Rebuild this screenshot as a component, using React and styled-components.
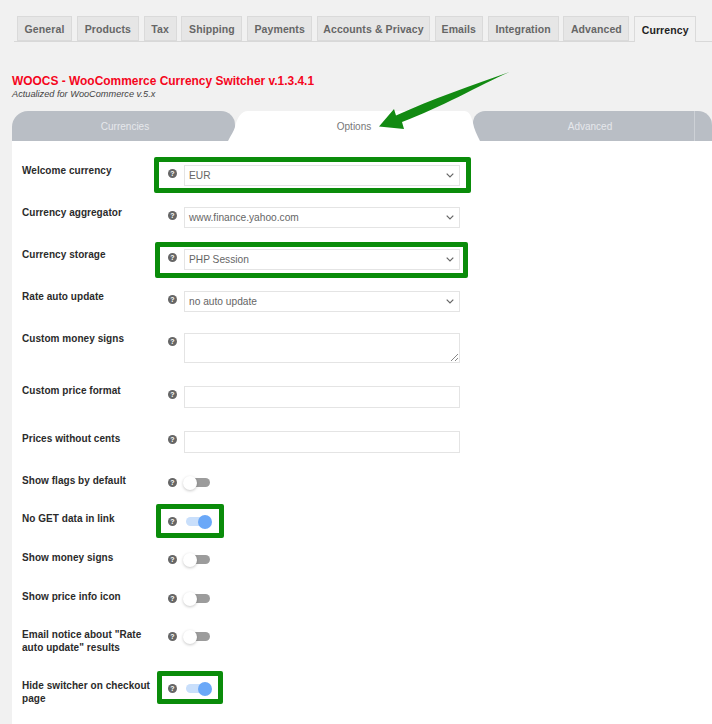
import React from "react";
import styled, { createGlobalStyle } from "styled-components";

const NAV_TABS = [
  { label: "General", width: 55 },
  { label: "Products", width: 62 },
  { label: "Tax", width: 33 },
  { label: "Shipping", width: 61 },
  { label: "Payments", width: 65 },
  { label: "Accounts & Privacy", width: 113 },
  { label: "Emails", width: 48 },
  { label: "Integration", width: 71 },
  { label: "Advanced", width: 66 },
  { label: "Currency", width: 62, active: true },
];

const App = () => (
  <>
    <GlobalStyle />
    <Page>
      <NavTabs>
        {NAV_TABS.map((tab) => (
          <NavTab key={tab.label} $width={tab.width} $active={tab.active}>
            {tab.label}
          </NavTab>
        ))}
      </NavTabs>

      <Heading>WOOCS - WooCommerce Currency Switcher v.1.3.4.1</Heading>
      <Subtitle>Actualized for WooCommerce v.5.x</Subtitle>

      <Panel>
        <Arrow width="140" height="70" viewBox="0 0 140 70">
          <path
            d="M139.5 7 C110 20 70 43 32 57 L34 64 L9 61.5 L24 44 L26 50.5 C60 35 105 19 139.5 7 Z"
            fill="#128a12"
          />
        </Arrow>
        <SectionTabs>
          <GrayTab $width={223} $radius="16px 14px 0 0" $inset={3}>Currencies</GrayTab>
          <ActiveTab>Options</ActiveTab>
          <GrayTab $width={221} $radius="12px 0 0 0" $inset={13}>Advanced</GrayTab>
          <EndTab />
        </SectionTabs>

        <Form>
          <Row $height={42}>
            <Label>Welcome currency</Label>
            <Help />
            <Control>
              <Select>EUR<Chevron /></Select>
              <Highlight $top={-8} $left={-30} $right={-11} $bottom={-7} />
            </Control>
          </Row>
          <Row $height={42}>
            <Label>Currency aggregator</Label>
            <Help />
            <Control>
              <Select>www.finance.yahoo.com<Chevron /></Select>
            </Control>
          </Row>
          <Row $height={42}>
            <Label>Currency storage</Label>
            <Help />
            <Control>
              <Select>PHP Session<Chevron /></Select>
              <Highlight $top={-7} $left={-29} $right={-8} $bottom={-8} />
            </Control>
          </Row>
          <Row $height={42}>
            <Label>Rate auto update</Label>
            <Help />
            <Control>
              <Select>no auto update<Chevron /></Select>
            </Control>
          </Row>
          <Row $height={53}>
            <Label>Custom money signs</Label>
            <Help />
            <Control>
              <TextArea>
                <ResizeGrip width="9" height="9" viewBox="0 0 9 9">
                  <path d="M1 8 L8 1 M5 8 L8 5" stroke="#888" strokeWidth="1" />
                </ResizeGrip>
              </TextArea>
            </Control>
          </Row>
          <Row $height={45}>
            <Label $offset={-1}>Custom price format</Label>
            <Help />
            <Control>
              <TextInput />
            </Control>
          </Row>
          <Row $height={43}>
            <Label $offset={2}>Prices without cents</Label>
            <Help />
            <Control>
              <TextInput />
            </Control>
          </Row>
          <ToggleRow height={39} label="Show flags by default" />
          <ToggleRow
            height={38}
            label="No GET data in link"
            offset={0}
            on
            highlight={{ $top: -9, $left: -28, $right: -12, $bottom: -12 }}
          />
          <ToggleRow height={39} label="Show money signs" />
          <ToggleRow height={38} label="Show price info icon" />
          <ToggleRow
            height={52}
            label={'Email notice about "Rate auto update" results'}
          />
          <ToggleRow
            height={37}
            label="Hide switcher on checkout page"
            offset={0}
            on
            highlight={{ $top: -9, $left: -27, $right: -11, $bottom: -11 }}
          />
        </Form>
      </Panel>
    </Page>
  </>
);

const Help = () => <HelpIcon>?</HelpIcon>;

const Chevron = () => (
  <ChevronIcon width="8" height="5" viewBox="0 0 8 5">
    <path d="M0.7 0.7 L4 4 L7.3 0.7" fill="none" stroke="#666" strokeWidth="1.2" />
  </ChevronIcon>
);

const ToggleRow = ({ height, label, on, highlight, offset = 1 }) => (
  <Row $height={height}>
    <Label $offset={offset}>{label}</Label>
    <Help />
    <Control $fit>
      <Toggle $on={on}>
        <Knob $on={on} />
      </Toggle>
      {highlight && <Highlight {...highlight} />}
    </Control>
  </Row>
);

const GlobalStyle = createGlobalStyle`
  html, body {
    margin: 0;
    padding: 0;
    background: #f1f1f1;
  }
  body {
    font-family: "Liberation Sans", Arial, sans-serif;
  }
`;

const Page = styled.div`
  width: 712px;
  height: 724px;
  overflow: hidden;
  padding-top: 16px;
  box-sizing: border-box;
`;

const NavTabs = styled.div`
  display: flex;
  gap: 4.8px;
  height: 25px;
  margin-left: 14px;
  padding-left: 3px;
  border-bottom: 1px solid #d8d8d8;
`;

const NavTab = styled.div`
  width: ${(p) => p.$width}px;
  height: ${(p) => (p.$active ? 26 : 25)}px;
  flex: none;
  box-sizing: border-box;
  display: flex;
  align-items: center;
  justify-content: center;
  font-size: 10.5px;
  font-weight: 700;
  letter-spacing: 0.1px;
  color: ${(p) => (p.$active ? "#1f1f1f" : "#666")};
  background: ${(p) => (p.$active ? "#f1f1f1" : "#e6e6e6")};
  border: 1px solid #dadada;
  border-bottom: ${(p) => (p.$active ? "none" : "1px solid #dadada")};
`;

const Heading = styled.div`
  margin: 32px 0 0 12px;
  font-size: 11.95px;
  line-height: 15px;
  font-weight: 700;
  color: #f5061d;
`;

const Subtitle = styled.div`
  margin-left: 12px;
  font-size: 9.2px;
  line-height: 11px;
  font-style: italic;
  color: #444;
`;

const Panel = styled.div`
  position: relative;
  height: 613px;
  margin: 11px 0 0 12px;
  background: #fff;
`;

const Arrow = styled.svg`
  position: absolute;
  top: -46px;
  left: 358px;
  z-index: 3;
`;

const SectionTabs = styled.div`
  display: flex;
  height: 30px;
  background: #f1f1f1;
`;

const TabBase = styled.div`
  display: flex;
  align-items: center;
  justify-content: center;
  box-sizing: border-box;
  font-size: 10px;
`;

const GrayTab = styled(TabBase)`
  flex: none;
  width: ${(p) => p.$width}px;
  padding-left: ${(p) => p.$inset}px;
  color: #e6e8ec;
  background: #b9bec5;
  border-radius: ${(p) => p.$radius};
`;

const ActiveTab = styled(TabBase)`
  position: relative;
  z-index: 1;
  flex: none;
  width: 252px;
  margin: 0 -7px;
  color: #777;
  background: #fff;
  clip-path: path("M0 30 C3 24 6 20 7 16 C9 7 13 0 20 0 L236 0 C241 0 243 4 245 12 C246 18 249 24 252 30 Z");
`;

const EndTab = styled.div`
  flex: 1;
  background: #b9bec5;
  border-left: 1px solid #cdd1d6;
  border-radius: 0 14px 0 0;
`;

const Form = styled.div`
  padding: 24px 0 0 10px;
`;

const Row = styled.div`
  display: grid;
  grid-template-columns: 135px 27px auto;
  justify-content: start;
  align-items: start;
  height: ${(p) => p.$height}px;
`;

const Label = styled.div`
  width: 131px;
  font-size: 10px;
  line-height: 13px;
  font-weight: 700;
  letter-spacing: 0.05px;
  color: #2b2b2b;
  margin-top: ${(p) => (p.$offset || 0) - 1}px;
`;

const HelpIcon = styled.span`
  width: 9px;
  height: 9px;
  margin: 4px 0 0 11px;
  border-radius: 50%;
  background: #666;
  color: #fff;
  font-size: 7px;
  line-height: 9px;
  font-weight: 700;
  text-align: center;
`;

const Control = styled.div`
  position: relative;
  width: ${(p) => (p.$fit ? "28px" : "276px")};
`;

const Field = styled.div`
  box-sizing: border-box;
  width: 276px;
  background: #fff;
  border: 1px solid #e4e4e4;
  font-size: 10.2px;
  color: #666;
`;

const Select = styled(Field)`
  height: 21px;
  display: flex;
  align-items: center;
  justify-content: space-between;
  padding: 0 5px 0 4px;
`;

const ChevronIcon = styled.svg`
  display: block;
`;

const TextArea = styled(Field)`
  position: relative;
  height: 30px;
`;

const ResizeGrip = styled.svg`
  position: absolute;
  right: 0;
  bottom: 0;
`;

const TextInput = styled(Field)`
  height: 22px;
`;

const Toggle = styled.div`
  position: relative;
  width: 24px;
  height: 9px;
  margin: 4px 0 0 2px;
  border-radius: 5px;
  background: ${(p) => (p.$on ? "#c9dffb" : "#9c9c9c")};
`;

const Knob = styled.div`
  position: absolute;
  top: -2.5px;
  left: ${(p) => (p.$on ? "12px" : "-3px")};
  width: 14px;
  height: 14px;
  border-radius: 50%;
  background: ${(p) => (p.$on ? "#6aa8f8" : "#fff")};
  box-shadow: ${(p) => (p.$on ? "none" : "0 1px 3px rgba(0, 0, 0, 0.22)")};
`;

const Highlight = styled.div`
  position: absolute;
  top: ${(p) => p.$top}px;
  left: ${(p) => p.$left}px;
  right: ${(p) => p.$right}px;
  bottom: ${(p) => p.$bottom}px;
  border: 5px solid #0a8c0a;
  border-radius: 2px;
  pointer-events: none;
`;

export default App;
